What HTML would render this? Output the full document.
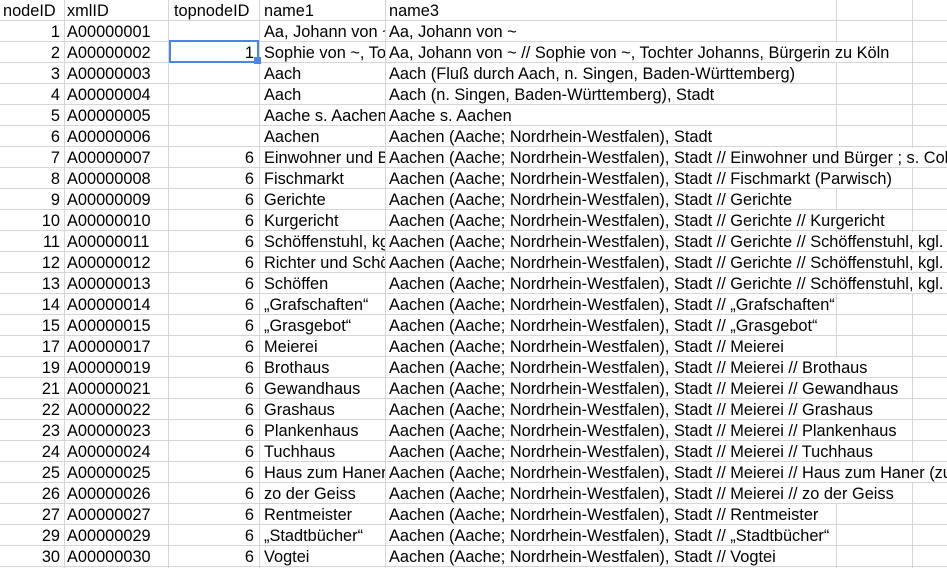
<!DOCTYPE html><html><head><meta charset="utf-8"><style>
body{margin:0;width:947px;height:568px;overflow:hidden;background:#fff;font-family:"Liberation Sans",sans-serif;font-size:16.35px;color:#000}
.r{position:absolute;left:0;width:947px;height:21px;box-sizing:border-box;border-bottom:1px solid #d6d6d6}
.v{position:absolute;top:0;width:1px;height:568px;background:#d6d6d6}
.c{position:absolute;top:1px;height:20px;line-height:20px;white-space:nowrap;overflow:hidden}
.n{left:0;width:60px;text-align:right}
.x{left:67px;width:100px}
.t{left:169px;width:85px;text-align:right}
.a{left:264px;width:121px}
.b{left:389px;overflow:visible;background:#fff;padding-right:1px;height:19px}
.sel{position:absolute;left:169px;top:40px;width:86px;height:19px;border:2px solid #4a86e8}
.h{position:absolute;left:254px;top:57px;width:7px;height:7px;background:#4a86e8}
</style></head><body>
<div class="v" style="left:64px"></div><div class="v" style="left:168px"></div><div class="v" style="left:259px"></div><div class="v" style="left:385px"></div><div class="v" style="left:836px"></div><div class="v" style="left:912px"></div>
<div class="r" style="top:0"><div class="c" style="left:3px">nodeID</div><div class="c x">xmlID</div><div class="c" style="left:174px">topnodeID</div><div class="c a">name1</div><div class="c b">name3</div></div>
<div class="r" style="top:21px"><div class="c n">1</div><div class="c x">A00000001</div><div class="c t"></div><div class="c a">Aa, Johann von ~</div><div class="c b">Aa, Johann von ~</div></div>
<div class="r" style="top:42px"><div class="c n">2</div><div class="c x">A00000002</div><div class="c t">1</div><div class="c a">Sophie von ~, Tochter</div><div class="c b">Aa, Johann von ~ // Sophie von ~, Tochter Johanns, Bürgerin zu Köln</div></div>
<div class="r" style="top:63px"><div class="c n">3</div><div class="c x">A00000003</div><div class="c a">Aach</div><div class="c b">Aach (Fluß durch Aach, n. Singen, Baden-Württemberg)</div></div>
<div class="r" style="top:84px"><div class="c n">4</div><div class="c x">A00000004</div><div class="c a">Aach</div><div class="c b">Aach (n. Singen, Baden-Württemberg), Stadt</div></div>
<div class="r" style="top:105px"><div class="c n">5</div><div class="c x">A00000005</div><div class="c a">Aache s. Aachen</div><div class="c b">Aache s. Aachen</div></div>
<div class="r" style="top:126px"><div class="c n">6</div><div class="c x">A00000006</div><div class="c a">Aachen</div><div class="c b">Aachen (Aache; Nordrhein-Westfalen), Stadt</div></div>
<div class="r" style="top:147px"><div class="c n">7</div><div class="c x">A00000007</div><div class="c t">6</div><div class="c a">Einwohner und Bürger</div><div class="c b">Aachen (Aache; Nordrhein-Westfalen), Stadt // Einwohner und Bürger ; s. Colyn</div></div>
<div class="r" style="top:168px"><div class="c n">8</div><div class="c x">A00000008</div><div class="c t">6</div><div class="c a">Fischmarkt</div><div class="c b">Aachen (Aache; Nordrhein-Westfalen), Stadt // Fischmarkt (Parwisch)</div></div>
<div class="r" style="top:189px"><div class="c n">9</div><div class="c x">A00000009</div><div class="c t">6</div><div class="c a">Gerichte</div><div class="c b">Aachen (Aache; Nordrhein-Westfalen), Stadt // Gerichte</div></div>
<div class="r" style="top:210px"><div class="c n">10</div><div class="c x">A00000010</div><div class="c t">6</div><div class="c a">Kurgericht</div><div class="c b">Aachen (Aache; Nordrhein-Westfalen), Stadt // Gerichte // Kurgericht</div></div>
<div class="r" style="top:231px"><div class="c n">11</div><div class="c x">A00000011</div><div class="c t">6</div><div class="c a">Schöffenstuhl, kgl.</div><div class="c b">Aachen (Aache; Nordrhein-Westfalen), Stadt // Gerichte // Schöffenstuhl, kgl. (</div></div>
<div class="r" style="top:252px"><div class="c n">12</div><div class="c x">A00000012</div><div class="c t">6</div><div class="c a">Richter und Schöffen</div><div class="c b">Aachen (Aache; Nordrhein-Westfalen), Stadt // Gerichte // Schöffenstuhl, kgl. (</div></div>
<div class="r" style="top:273px"><div class="c n">13</div><div class="c x">A00000013</div><div class="c t">6</div><div class="c a">Schöffen</div><div class="c b">Aachen (Aache; Nordrhein-Westfalen), Stadt // Gerichte // Schöffenstuhl, kgl. (</div></div>
<div class="r" style="top:294px"><div class="c n">14</div><div class="c x">A00000014</div><div class="c t">6</div><div class="c a">„Grafschaften“</div><div class="c b">Aachen (Aache; Nordrhein-Westfalen), Stadt // „Grafschaften“</div></div>
<div class="r" style="top:315px"><div class="c n">15</div><div class="c x">A00000015</div><div class="c t">6</div><div class="c a">„Grasgebot“</div><div class="c b">Aachen (Aache; Nordrhein-Westfalen), Stadt // „Grasgebot“</div></div>
<div class="r" style="top:336px"><div class="c n">17</div><div class="c x">A00000017</div><div class="c t">6</div><div class="c a">Meierei</div><div class="c b">Aachen (Aache; Nordrhein-Westfalen), Stadt // Meierei</div></div>
<div class="r" style="top:357px"><div class="c n">19</div><div class="c x">A00000019</div><div class="c t">6</div><div class="c a">Brothaus</div><div class="c b">Aachen (Aache; Nordrhein-Westfalen), Stadt // Meierei // Brothaus</div></div>
<div class="r" style="top:378px"><div class="c n">21</div><div class="c x">A00000021</div><div class="c t">6</div><div class="c a">Gewandhaus</div><div class="c b">Aachen (Aache; Nordrhein-Westfalen), Stadt // Meierei // Gewandhaus</div></div>
<div class="r" style="top:399px"><div class="c n">22</div><div class="c x">A00000022</div><div class="c t">6</div><div class="c a">Grashaus</div><div class="c b">Aachen (Aache; Nordrhein-Westfalen), Stadt // Meierei // Grashaus</div></div>
<div class="r" style="top:420px"><div class="c n">23</div><div class="c x">A00000023</div><div class="c t">6</div><div class="c a">Plankenhaus</div><div class="c b">Aachen (Aache; Nordrhein-Westfalen), Stadt // Meierei // Plankenhaus</div></div>
<div class="r" style="top:441px"><div class="c n">24</div><div class="c x">A00000024</div><div class="c t">6</div><div class="c a">Tuchhaus</div><div class="c b">Aachen (Aache; Nordrhein-Westfalen), Stadt // Meierei // Tuchhaus</div></div>
<div class="r" style="top:462px"><div class="c n">25</div><div class="c x">A00000025</div><div class="c t">6</div><div class="c a">Haus zum Haner</div><div class="c b">Aachen (Aache; Nordrhein-Westfalen), Stadt // Meierei // Haus zum Haner (zum</div></div>
<div class="r" style="top:483px"><div class="c n">26</div><div class="c x">A00000026</div><div class="c t">6</div><div class="c a">zo der Geiss</div><div class="c b">Aachen (Aache; Nordrhein-Westfalen), Stadt // Meierei // zo der Geiss</div></div>
<div class="r" style="top:504px"><div class="c n">27</div><div class="c x">A00000027</div><div class="c t">6</div><div class="c a">Rentmeister</div><div class="c b">Aachen (Aache; Nordrhein-Westfalen), Stadt // Rentmeister</div></div>
<div class="r" style="top:525px"><div class="c n">29</div><div class="c x">A00000029</div><div class="c t">6</div><div class="c a">„Stadtbücher“</div><div class="c b">Aachen (Aache; Nordrhein-Westfalen), Stadt // „Stadtbücher“</div></div>
<div class="r" style="top:546px"><div class="c n">30</div><div class="c x">A00000030</div><div class="c t">6</div><div class="c a">Vogtei</div><div class="c b">Aachen (Aache; Nordrhein-Westfalen), Stadt // Vogtei</div></div>
<div class="sel"></div><div class="h"></div>
</body></html>
